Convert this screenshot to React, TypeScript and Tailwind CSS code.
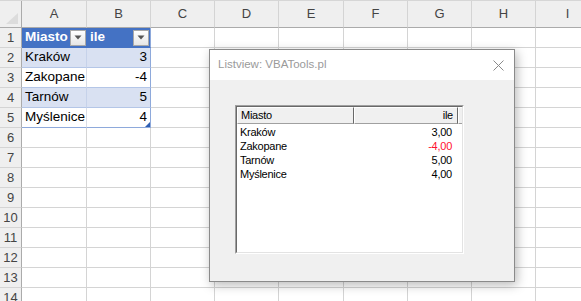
import React from "react";

const colW = ["w-[65px]", "w-[64px]", "w-[64px]", "w-[64px]", "w-[65px]", "w-[64px]", "w-[64px]", "w-[64px]", "w-[64px]"];
const letters = ["A", "B", "C", "D", "E", "F", "G", "H", "I"];

function Dropdown() {
  return (
    <div className="w-[16px] h-[16px] border border-[#a9a9a9] bg-gradient-to-b from-[#ffffff] to-[#e6e6e6] flex items-center justify-center">
      <svg width="8" height="5" viewBox="0 0 8 5">
        <path d="M0.5 0.5 L7.5 0.5 L4 4.5 Z" fill="#555" />
      </svg>
    </div>
  );
}

const tableRows: { a: string; b: string; band: boolean }[] = [
  { a: "Kraków", b: "3", band: true },
  { a: "Zakopane", b: "-4", band: false },
  { a: "Tarnów", b: "5", band: true },
  { a: "Myślenice", b: "4", band: false },
];

const lvRows = [
  { c: "Kraków", v: "3,00", red: false },
  { c: "Zakopane", v: "-4,00", red: true },
  { c: "Tarnów", v: "5,00", red: false },
  { c: "Myślenice", v: "4,00", red: false },
];

export default function App() {
  const rowNums = Array.from({ length: 14 }, (_, i) => i + 1);
  return (
    <div
      className="relative w-[581px] h-[301px] overflow-hidden bg-white text-[#222]"
      style={{ fontFamily: '"Liberation Sans", Arial, sans-serif' }}
    >
      {/* column header row */}
      <div className="flex h-[28px] border-t border-[#d6d6d6]">
        <div className="w-[22px] shrink-0 h-full bg-[#efefef] border-r border-b border-[#ababab] relative flex items-end justify-end">
          <svg width="14" height="12" viewBox="0 0 14 12" className="mb-[2px] mr-[2px]">
            <path d="M13 0 L13 11 L1 11 Z" fill="#dcdcdc" />
          </svg>
        </div>
        {letters.map((l, i) => (
          <div
            key={l}
            className={`${colW[i]} shrink-0 h-full bg-[#efefef] border-r border-b border-r-[#d4d4d4] border-b-[#ababab] flex items-center justify-center text-[13px] text-[#444]`}
          >
            {l}
          </div>
        ))}
      </div>

      {rowNums.map((n) => {
        const isHeader = n === 1;
        const tr = n >= 2 && n <= 5 ? tableRows[n - 2] : null;
        return (
          <div key={n} className="flex h-[20px]">
            <div className="w-[22px] shrink-0 h-full bg-[#efefef] border-r border-b border-r-[#ababab] border-b-[#d4d4d4] flex items-center justify-center text-[13px] text-[#444]">
              {n}
            </div>
            {letters.map((l, i) => {
              if (isHeader && i === 0) {
                return (
                  <div key={l} className={`${colW[i]} shrink-0 h-full bg-[#4472c4] border-b border-[#4472c4] flex items-center justify-between pl-[3px] pr-[1px] text-white font-bold text-[13.5px]`}>
                    <span>Miasto</span>
                    <Dropdown />
                  </div>
                );
              }
              if (isHeader && i === 1) {
                return (
                  <div key={l} className={`${colW[i]} shrink-0 h-full bg-[#4472c4] border-r border-b border-r-[#8ea9db] border-b-[#4472c4] flex items-center justify-between pl-[3px] pr-[1px] text-white font-bold text-[13.5px]`}>
                    <span>ile</span>
                    <Dropdown />
                  </div>
                );
              }
              if (tr && i === 0) {
                return (
                  <div
                    key={l}
                    className={`${colW[i]} shrink-0 h-full border-r border-b ${tr.band ? "bg-[#d9e1f2] border-r-[#c6d2ea]" : "bg-white border-r-[#d9dde6]"} ${n === 5 ? "border-b-[#8ea9db]" : "border-b-[#b4c6e7]"} flex items-center pl-[3px] text-[13.5px] text-black whitespace-nowrap`}
                  >
                    {tr.a}
                  </div>
                );
              }
              if (tr && i === 1) {
                return (
                  <div
                    key={l}
                    className={`${colW[i]} shrink-0 h-full relative border-r border-b border-r-[#8ea9db] ${tr.band ? "bg-[#d9e1f2]" : "bg-white"} ${n === 5 ? "border-b-[#8ea9db]" : "border-b-[#b4c6e7]"} flex items-center justify-end pr-[3px] text-[13.5px] text-black`}
                  >
                    {tr.b}
                    {n === 5 && (
                      <svg width="5" height="5" viewBox="0 0 5 5" className="absolute right-0 bottom-0">
                        <path d="M5 0 L5 5 L0 5 Z" fill="#2f5fb3" />
                      </svg>
                    )}
                  </div>
                );
              }
              return <div key={l} className={`${colW[i]} shrink-0 h-full border-r border-b border-[#d4d4d4]`} />;
            })}
          </div>
        );
      })}

      {/* Dialog window */}
      <div className="absolute left-[209px] top-[49px] w-[306px] h-[233px] border border-[#8a8a8a] bg-[#f0f0f0] shadow-[2px_3px_10px_rgba(0,0,0,0.28)] flex flex-col">
        <div className="h-[30px] bg-white flex items-center justify-between pl-[8px] pr-[10px] shrink-0">
          <span className="text-[11.5px] text-[#9a9a9a]">
            Listview: VBATools.pl
          </span>
          <svg width="11" height="11" viewBox="0 0 11 11">
            <path d="M0.5 0.5 L10.5 10.5 M10.5 0.5 L0.5 10.5" stroke="#8a8a8a" strokeWidth="1" />
          </svg>
        </div>
        <div className="flex-1 pl-[25px] pt-[25px]">
          <div className="w-[229px] h-[149px] border-t border-l border-t-[#a0a0a0] border-l-[#a0a0a0] border-b border-r border-b-white border-r-white">
            <div
              className="w-full h-full border-t border-l border-t-[#696969] border-l-[#696969] border-b border-r border-b-[#e3e3e3] border-r-[#e3e3e3] bg-white flex flex-col text-[11px] text-[#000000]"
              style={{ letterSpacing: "-0.25px" }}
            >
              <div className="flex h-[17px] shrink-0 bg-[#f0f0f0] text-[#000000]">
                <div className="w-[117px] h-full border-t border-l border-t-white border-l-white border-r border-b border-r-[#696969] border-b-[#a0a0a0] flex items-center pl-[3px]">
                  <span className="text-[#000000]">Miasto</span>
                </div>
                <div className="w-[104px] h-full border-t border-l border-t-white border-l-white border-r border-b border-r-[#696969] border-b-[#a0a0a0] flex items-center justify-end pr-[4px]">
                  <span className="text-[#000000]">ile</span>
                </div>
                <div className="flex-1 h-full border-t border-l border-t-white border-l-white border-b border-b-[#a0a0a0]" />
              </div>
              <div className="pt-[1px] flex flex-col">
                {lvRows.map((r) => (
                  <div key={r.c} className="flex h-[14px] items-center">
                    <div className="w-[117px] pl-[3px]">{r.c}</div>
                    <div className={`w-[98px] text-right ${r.red ? "text-[#ff1030]" : ""}`}>{r.v}</div>
                  </div>
                ))}
              </div>
            </div>
          </div>
        </div>
      </div>
    </div>
  );
}
